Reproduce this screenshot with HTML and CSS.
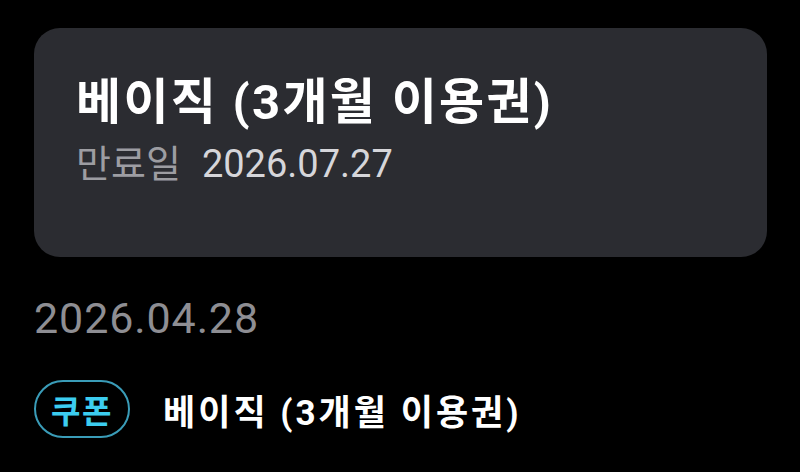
FILE: index.html
```html
<!DOCTYPE html>
<html lang="ko">
<head>
<meta charset="utf-8">
<link rel="stylesheet" href="styles.css">
</head>
<body>
<div class="page">
  <section class="card">
    <h1 class="card-title">베이직 (3개월 이용권)</h1>
    <p class="card-sub"><span class="label">만료일</span><span class="value">2026.07.27</span></p>
  </section>
  <div class="date">2026.04.28</div>
  <div class="row">
    <span class="badge">쿠폰</span>
    <span class="row-title">베이직 (3개월 이용권)</span>
  </div>
</div>
</body>
</html>
```
FILE: styles.css
```css
html, body {
  margin: 0;
  padding: 0;
  background: #000;
}
body {
  font-family: Roboto, "Noto Sans CJK KR", sans-serif;
  width: 800px;
  height: 472px;
  overflow: hidden;
}
.page {
  padding: 28px 33px 0 34px;
}
.card {
  background: #2b2c31;
  border-radius: 26px;
  height: 229px;
  box-sizing: border-box;
  padding: 50px 42px 0 42px;
}
.card-title {
  margin: 0;
  color: #fff;
  font-size: 49px;
  font-weight: 700;
  line-height: 1;
  letter-spacing: 2.3px;
}
.card-sub {
  margin: 18px 0 0 0;
  font-size: 38px;
  line-height: 1;
  display: flex;
  gap: 21px;
}
.card-sub .label { color: #9d9da2; }
.card-sub .value { color: #d6d6da; }
.date {
  margin-top: 40px;
  color: #8e8e93;
  font-size: 43px;
  line-height: 1;
  letter-spacing: 0.9px;
}
.row {
  margin-top: 40px;
  display: flex;
  align-items: center;
  gap: 33px;
}
.badge {
  box-sizing: border-box;
  width: 96px;
  height: 58px;
  border: 2px solid #3a9cb8;
  border-radius: 29px;
  color: #3ccdf0;
  font-size: 32px;
  font-weight: 700;
  letter-spacing: 1.5px;
  display: flex;
  align-items: center;
  justify-content: center;
}
.row-title {
  color: #fff;
  font-size: 35px;
  font-weight: 700;
  letter-spacing: 3px;
}
```
